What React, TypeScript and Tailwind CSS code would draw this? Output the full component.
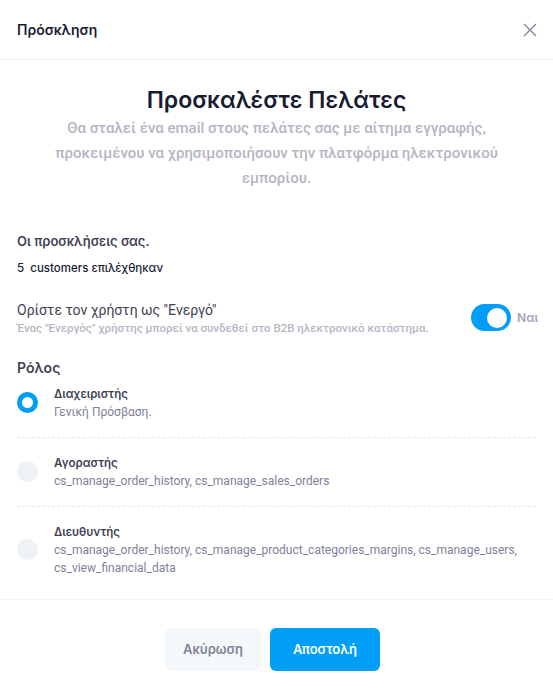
type Role = {
  title: string;
  perms: string;
  checked?: boolean;
};

const roles: Role[] = [
  { title: "Διαχειριστής", perms: "Γενική Πρόσβαση.", checked: true },
  { title: "Αγοραστής", perms: "cs_manage_order_history, cs_manage_sales_orders" },
  {
    title: "Διευθυντής",
    perms:
      "cs_manage_order_history, cs_manage_product_categories_margins, cs_manage_users, cs_view_financial_data",
  },
];

const RoleRow = ({ title, perms, checked }: Role) => (
  <div className="flex items-center gap-4">
    {checked ? (
      <span className="w-[21px] h-[21px] shrink-0 rounded-full border-[5px] border-[#009ef7] bg-white" />
    ) : (
      <span className="w-[21px] h-[21px] shrink-0 rounded-full bg-[#eff2f5]" />
    )}
    <div className="flex flex-col">
      <span className="text-[11.5px] font-semibold text-[#3f4254] leading-[18px]">{title}</span>
      <span className="font-['Roboto',sans-serif] text-[12px] text-[#7e8299] leading-[18px]">{perms}</span>
    </div>
  </div>
);

const App = () => {
  return (
    <div className="w-[553px] h-[689px] bg-white font-['Inter',sans-serif] text-[#181c32]">
      <div className="h-[60px] flex items-center justify-between pl-[17px] pr-[16px] border-b border-[#eff2f5]">
        <h2 className="text-[14px] font-semibold text-[#181c32]">Πρόσκληση</h2>
        <svg width="14" height="14" viewBox="0 0 14 14" className="text-[#7e8299]">
          <path d="M1 1L13 13M13 1L1 13" stroke="currentColor" strokeWidth="1.3" />
        </svg>
      </div>

      <div className="px-[17px] pt-[25px]">
        <div className="text-center">
          <h1 className="text-[23px] font-semibold leading-[30px] text-[#181c32]">Προσκαλέστε Πελάτες</h1>
          <p className="mt-[1px] px-[38px] font-['Roboto',sans-serif] text-[15px] font-medium leading-[25px] text-[#b5b5c3]">
            Θα σταλεί ένα email στους πελάτες σας με αίτημα εγγραφής, προκειμένου να χρησιμοποιήσουν την πλατφόρμα
            ηλεκτρονικού εμπορίου.
          </p>
        </div>

        <div className="mt-[41px]">
          <div className="text-[13px] font-semibold text-[#3f4254]">Οι προσκλήσεις σας.</div>
          <div className="mt-[8px] text-[11.5px] font-medium text-[#181c32]">5&nbsp; customers επιλέχθηκαν</div>
        </div>

        <div className="mt-[23px] flex items-center justify-between">
          <div className="flex flex-col font-['Roboto',sans-serif]">
            <span className="text-[14px] text-[#3f4254] leading-[20px]">Ορίστε τον χρήστη ως "Ενεργό"</span>
            <span className="text-[11.5px] font-medium text-[#b5b5c3] leading-[16px]">
              Ένας "Ενεργός" χρήστης μπορεί να συνδεθεί στο B2B ηλεκτρονικό κατάστημα.
            </span>
          </div>
          <div className="flex items-center gap-[6px] mr-[-2px]">
            <span className="w-[40px] h-[27px] rounded-full bg-[#009ef7] flex items-center justify-end pr-[4px]">
              <span className="w-[20px] h-[20px] rounded-full bg-white" />
            </span>
            <span className="text-[12px] font-semibold text-[#a1a5b7]">Ναι</span>
          </div>
        </div>

        <div className="mt-[21px]">
          <div className="text-[14px] font-semibold text-[#3f4254] mb-[7px]">Ρόλος</div>
          <div>
            {roles.map((r, i) => (
              <div key={r.title}>
                {i > 0 && <div className="border-t border-dashed border-[#e4e6ef] my-[16px]" />}
                <RoleRow {...r} />
              </div>
            ))}
          </div>
        </div>
      </div>

      <div className="mt-[22px] border-t border-[#eff2f5] flex justify-center gap-[9px] pt-[28px] pr-[8px]">
        <button className="w-[96px] h-[43px] rounded-[6px] bg-[#f5f8fa] text-[13px] font-semibold text-[#7e8299]">
          Ακύρωση
        </button>
        <button className="w-[110px] h-[43px] rounded-[6px] bg-[#009ef7] text-[13px] font-semibold text-white">
          Αποστολή
        </button>
      </div>
    </div>
  );
};

export default App;
